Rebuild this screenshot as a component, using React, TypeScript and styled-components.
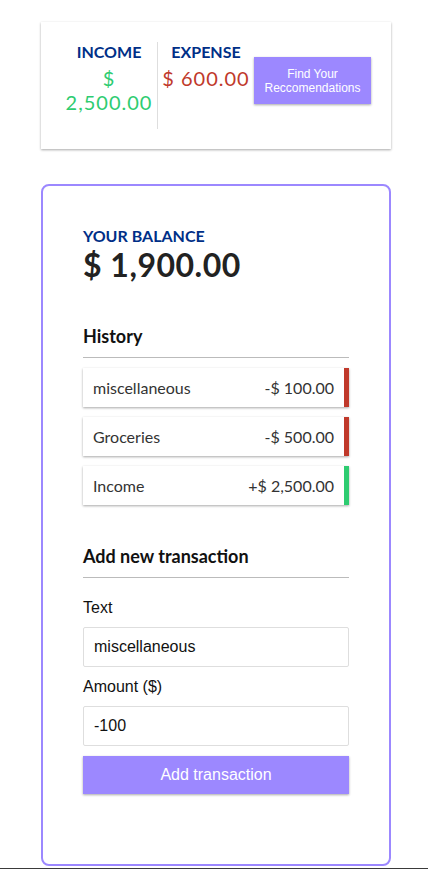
import React from 'react'
import styled, { createGlobalStyle } from 'styled-components'

const GlobalStyle = createGlobalStyle`
  * {
    box-sizing: border-box;
  }
  body {
    margin: 0;
    background-color: #fff;
    font-family: Lato, 'Noto Sans', sans-serif;
    color: #333;
  }
`

const Page = styled.div`
  display: flex;
  flex-direction: column;
  padding: 22px 0 0 41px;
`

const Container = styled.div`
  width: 350px;
  display: flex;
  flex-direction: column;
  gap: 35px;
`

const IncExpCard = styled.div`
  background-color: #fff;
  box-shadow: 0 1px 3px rgba(0, 0, 0, 0.12), 0 1px 2px rgba(0, 0, 0, 0.24);
  padding: 20px;
  display: flex;
  align-items: flex-start;
`

const Column = styled.div<{ $divider?: boolean }>`
  flex: 1;
  text-align: center;
  padding-bottom: 10px;
  border-right: ${(p) => (p.$divider ? '1px solid #dedede' : 'none')};

  h4 {
    margin: 0;
    font-size: 16px;
    font-weight: 700;
    color: #002f87;
    text-transform: uppercase;
  }
`

const Money = styled.p<{ $type: 'plus' | 'minus' }>`
  margin: 5px 0;
  font-size: 20px;
  letter-spacing: 1px;
  color: ${(p) => (p.$type === 'plus' ? '#2ecc71' : '#c0392b')};
`

const RecButton = styled.button`
  flex: none;
  width: 117px;
  height: 47px;
  margin-top: 15px;
  border: 0;
  padding: 0 6px;
  background-color: #9c88ff;
  color: #fff;
  font-family: 'Liberation Sans', Arial, sans-serif;
  font-size: 12px;
  line-height: 14px;
  box-shadow: 0 1px 3px rgba(0, 0, 0, 0.12), 0 1px 2px rgba(0, 0, 0, 0.24);
  cursor: pointer;
`

const MainCard = styled.div`
  border: 2px solid #9c88ff;
  border-radius: 8px;
  padding: 40px;
  display: flex;
  flex-direction: column;
`

const BalanceLabel = styled.h4`
  margin: 0;
  font-size: 16px;
  font-weight: 700;
  color: #002f87;
  text-transform: uppercase;
`

const Balance = styled.h1`
  margin: 0;
  font-size: 32px;
  font-weight: 700;
  letter-spacing: 0.5px;
  color: #222;
`

const SectionTitle = styled.h3<{ $top: number }>`
  margin: ${(p) => p.$top}px 0 10px;
  padding-bottom: 10px;
  border-bottom: 1px solid #bbb;
  font-size: 18px;
  font-weight: 700;
  color: #111;
`

const List = styled.ul`
  list-style: none;
  margin: 0 0 30px;
  padding: 0;
  display: flex;
  flex-direction: column;
  gap: 10px;
`

const Item = styled.li<{ $type: 'plus' | 'minus' }>`
  display: flex;
  justify-content: space-between;
  padding: 10px;
  background-color: #fff;
  font-size: 16px;
  color: #333;
  box-shadow: 0 1px 3px rgba(0, 0, 0, 0.12), 0 1px 2px rgba(0, 0, 0, 0.24);
  border-right: 5px solid ${(p) => (p.$type === 'plus' ? '#2ecc71' : '#c0392b')};
`

const Form = styled.form`
  display: flex;
  flex-direction: column;
  font-family: 'Liberation Sans', Arial, sans-serif;
  padding-bottom: 30px;
`

const Label = styled.label`
  display: block;
  margin: 11px 0 10px;
  font-size: 16px;
  color: #111;
`

const Input = styled.input`
  width: 100%;
  height: 40px;
  padding: 10px;
  border: 1px solid #dedede;
  border-radius: 2px;
  font-family: 'Liberation Sans', Arial, sans-serif;
  font-size: 16px;
  color: #111;
  outline: none;
`

const SubmitButton = styled.button`
  margin-top: 10px;
  height: 38px;
  border: 0;
  background-color: #9c88ff;
  color: #fff;
  font-family: 'Liberation Sans', Arial, sans-serif;
  font-size: 16px;
  box-shadow: 0 1px 3px rgba(0, 0, 0, 0.12), 0 1px 2px rgba(0, 0, 0, 0.24);
  cursor: pointer;
`

const Footer = styled.div`
  margin: 2px 0 0 -41px;
  border-top: 2px solid #3a3a3a;
  height: 10px;
`

const transactions = [
  { id: 1, text: 'miscellaneous', amount: '-$ 100.00', type: 'minus' as const },
  { id: 2, text: 'Groceries', amount: '-$ 500.00', type: 'minus' as const },
  { id: 3, text: 'Income', amount: '+$ 2,500.00', type: 'plus' as const },
]

export default function App() {
  return (
    <>
      <GlobalStyle />
      <Page>
        <Container>
          <IncExpCard>
            <Column $divider>
              <h4>Income</h4>
              <Money $type='plus'>$ 2,500.00</Money>
            </Column>
            <Column>
              <h4>Expense</h4>
              <Money $type='minus'>$ 600.00</Money>
            </Column>
            <RecButton>Find Your Reccomendations</RecButton>
          </IncExpCard>

          <MainCard>
            <BalanceLabel>Your Balance</BalanceLabel>
            <Balance>$ 1,900.00</Balance>

            <SectionTitle $top={41}>History</SectionTitle>
            <List>
              {transactions.map((t) => (
                <Item key={t.id} $type={t.type}>
                  <span>{t.text}</span>
                  <span>{t.amount}</span>
                </Item>
              ))}
            </List>

            <SectionTitle $top={10}>Add new transaction</SectionTitle>
            <Form onSubmit={(e) => e.preventDefault()}>
              <Label htmlFor='text'>Text</Label>
              <Input id='text' type='text' defaultValue='miscellaneous' />
              <Label htmlFor='amount'>Amount ($)</Label>
              <Input id='amount' type='text' defaultValue='-100' />
              <SubmitButton type='submit'>Add transaction</SubmitButton>
            </Form>
          </MainCard>
        </Container>
        <Footer />
      </Page>
    </>
  )
}
